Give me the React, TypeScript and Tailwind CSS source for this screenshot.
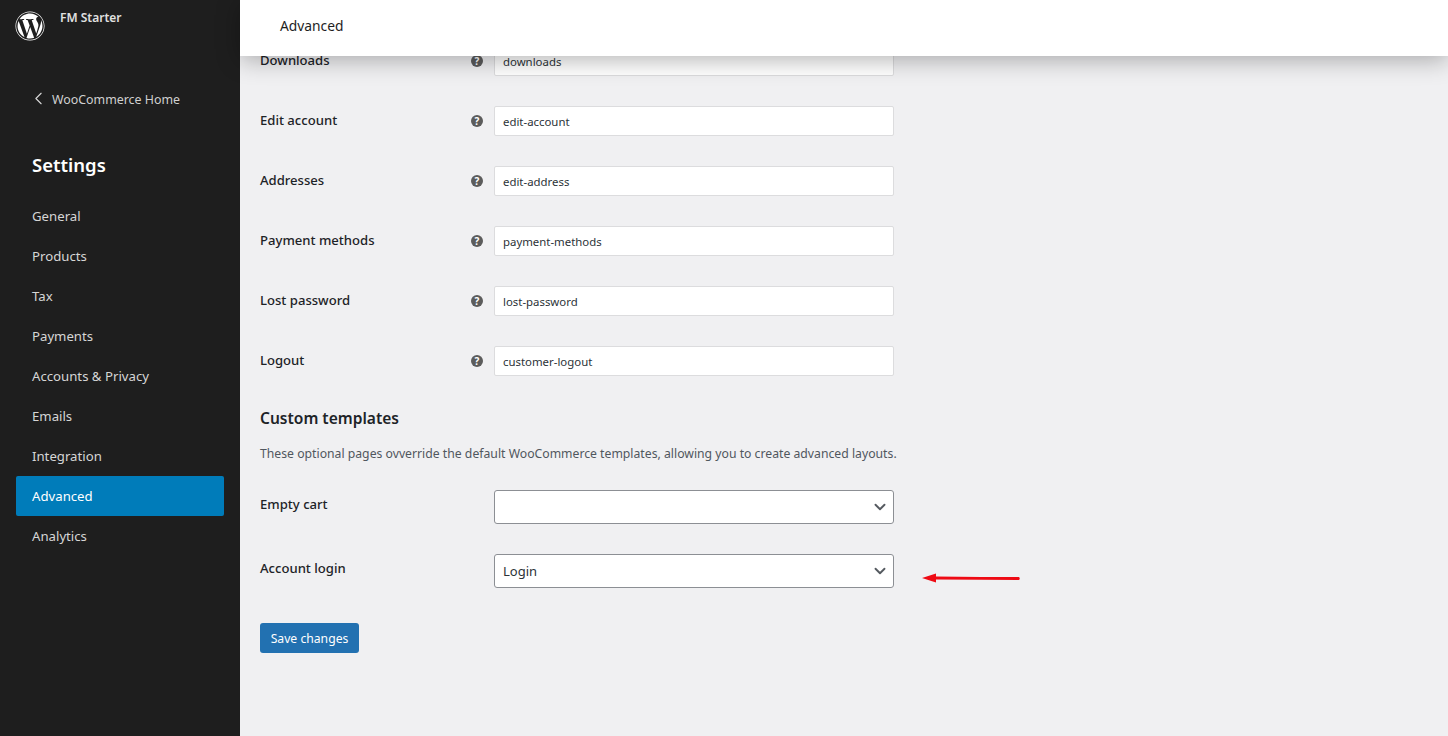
import React from "react";
import { FaWordpress } from "react-icons/fa";
import { ChevronLeft, ChevronDown } from "lucide-react";

const nav = ["General", "Products", "Tax", "Payments", "Accounts & Privacy", "Emails", "Integration", "Advanced", "Analytics"];
const rows = [
  ["Downloads", "downloads"],
  ["Edit account", "edit-account"],
  ["Addresses", "edit-address"],
  ["Payment methods", "payment-methods"],
  ["Lost password", "lost-password"],
  ["Logout", "customer-logout"],
];

function Select({ value }: { value: string }) {
  return (
    <div className="w-[400px] h-[34px] bg-white border border-[#8c8f94] rounded-[3px] flex items-center justify-between pl-2 pr-[4px] text-[13px] text-[#2c3338]">
      <span className="pt-[2px]">{value}</span>
      <ChevronDown size={18} strokeWidth={2.5} className="text-[#555a60]" />
    </div>
  );
}

export default function App() {
  return (
    <div className="flex h-[736px] w-[1448px] overflow-hidden bg-[#f0f0f2] font-['Noto_Sans','Open_Sans',sans-serif] text-[13px] text-[#3c434a]">
      <aside className="w-[240px] shrink-0 bg-[#1e1e1e] flex flex-col">
        <div className="flex h-[56px] pl-[15px] pt-[11px] gap-[15px]">
          <FaWordpress size={30} className="text-white" />
          <span className="text-[12px] font-semibold text-[#e0e0e0] leading-[16px] -mt-px">FM Starter</span>
        </div>
        <div className="flex items-center gap-[3px] pl-[28px] mt-[34px] h-[20px] text-[#d0d0d0] text-[12.4px]">
          <ChevronLeft size={21} strokeWidth={1.3} className="-mt-[3px] text-[#d8d8d8]" />
          <span>WooCommerce Home</span>
        </div>
        <h1 className="pl-[32px] mt-[41px] text-[18.5px] leading-[28px] font-semibold text-white">Settings</h1>
        <nav className="mt-[17px] flex flex-col px-[16px]">
          {nav.map((n) => (
            <div
              key={n}
              className={
                "h-[40px] flex items-center pl-[16px] pt-[2px] rounded-[2px] text-[13.2px] " +
                (n === "Advanced" ? "bg-[#007cba] text-white" : "text-[#d6d6d6]")
              }
            >
              {n}
            </div>
          ))}
        </nav>
      </aside>
      <main className="flex-1 flex flex-col min-w-0 relative">
        <header className="h-[56px] shrink-0 bg-white flex items-center pl-[40px] pb-[3px] text-[13.8px] text-[#1e1e1e] relative z-10 shadow-[0_4px_24px_rgba(0,0,0,0.3)]">
          Advanced
        </header>
        <div className="flex-1 pl-[20px] -mt-[10px]">
          <div className="flex flex-col gap-[30px]">
            {rows.map(([label, val]) => (
              <div key={label} className="flex h-[30px]">
                <div className="w-[211px] text-[13.1px] font-medium text-[#1d2327] leading-[18px] pt-[5px]">{label}</div>
                <div className="w-[23px] pt-[9px]">
                  <span className="flex w-[12px] h-[12px] rounded-full bg-[#5c5c5c] text-white text-[10px] font-bold items-center justify-center leading-none">?</span>
                </div>
                <div className="w-[400px] h-[30px] bg-white border border-[#dcdcde] rounded-[2px] flex items-center pl-2 pt-[2px] text-[#2c3338] text-[11.4px]">
                  {val}
                </div>
              </div>
            ))}
          </div>
          <h2 className="text-[15.55px] leading-[22px] font-semibold text-[#1d2327] mt-[31px]">Custom templates</h2>
          <p className="mt-[16px] leading-[18px] text-[#50575e] text-[12.23px]">
            These optional pages ovverride the default WooCommerce templates, allowing you to create advanced layouts.
          </p>
          <div className="mt-[27px] flex flex-col gap-[30px]">
            {[["Empty cart", ""], ["Account login", "Login"]].map(([label, v]) => (
              <div key={label} className="flex items-start relative">
                <div className="w-[234px] text-[13.1px] font-medium text-[#1d2327] leading-[18px] pt-[5px]">{label}</div>
                <Select value={v} />
                {v && (
                  <svg className="absolute left-[661px] top-[16px]" width="100" height="16" viewBox="0 0 100 16">
                    <path d="M1 8 L15 3.5 L15 6.4 L60 6.9 L98 7 Q99.5 8.5 98 10 L60 9.8 L15 9.4 L15 12.5 Z" fill="#ee0a14" />
                  </svg>
                )}
              </div>
            ))}
          </div>
          <button className="mt-[35px] h-[30px] w-[99px] pt-[2px] rounded-[3px] bg-[#2271b1] text-white text-[12.2px] flex items-center justify-center">
            Save changes
          </button>
        </div>
      </main>
    </div>
  );
}
